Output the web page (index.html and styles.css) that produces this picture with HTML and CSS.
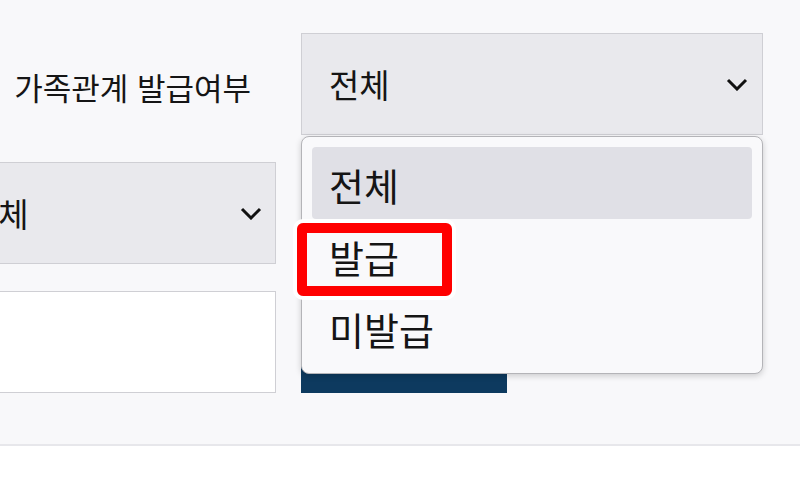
FILE: index.html
```html
<!DOCTYPE html>
<html lang="ko">

<head>
    <meta charset="UTF-8">
    <meta name="viewport" content="width=device-width, initial-scale=1.0">
    <title>가족관계 발급여부</title>
    <link rel="stylesheet" href="styles.css">
</head>

<body>
    <div class="search-panel">
        <div class="search-grid">
            <div class="field-label">가족관계 발급여부</div>
            <div class="field">
                <div class="select">
                    <span>전체</span>
                    <svg class="chevron" viewBox="0 0 22 13"><path d="M2 2 L11 11 L20 2" /></svg>
                </div>

                <!-- opened option list -->
                <ul class="option-list">
                    <li class="option is-selected">전체</li>
                    <li class="option">발급<span class="mark"></span></li>
                    <li class="option">미발급</li>
                </ul>
            </div>

            <div class="field field-left">
                <div class="select">
                    <span>전체</span>
                    <svg class="chevron" viewBox="0 0 22 13"><path d="M2 2 L11 11 L20 2" /></svg>
                </div>
            </div>
            <div class="field">
                <!-- covered by the open list -->
                <div class="select"></div>
            </div>

            <div class="field field-left">
                <input class="text-input" type="text">
            </div>
            <div class="field">
                <button class="search-button" aria-label="조회"></button>
            </div>
        </div>
    </div>
    <div class="page-rest"></div>
</body>

</html>
```

FILE: styles.css
```css
:root {
    --panel-bg: #f8f8fa;
    --select-bg: #e9e9ed;
    --field-border: #cfcfd4;
    --text-color: #151515;
    --navy: #0d3a5f;
    --menu-bg: #f9f9fb;
    --menu-active: #e0e0e6;
}

* {
    margin: 0;
    padding: 0;
    box-sizing: border-box;
}

body {
    font-family: "Noto Sans CJK KR", "Noto Sans", sans-serif;
    color: var(--text-color);
    background: #ffffff;
    overflow: hidden;
}

.search-panel {
    background-color: var(--panel-bg);
    border-bottom: 2px solid #e7e7eb;
    height: 446px;
    padding-top: 33px;
    overflow: hidden;
}

.search-grid {
    display: grid;
    grid-template-columns: 336px 462px;
    grid-auto-rows: 102px;
    column-gap: 25px;
    row-gap: 27px;
    margin-left: -60px;
}

.field-label {
    display: flex;
    align-items: center;
    justify-content: flex-end;
    padding-right: 25px;
    font-size: 31px;
    padding-top: 4px;
    white-space: nowrap;
}

.field {
    position: relative;
}

.select {
    height: 100%;
    display: flex;
    align-items: center;
    justify-content: space-between;
    padding: 0 14px 0 27px;
    background-color: var(--select-bg);
    border: 1px solid var(--field-border);
    font-size: 33px;
}

.field-left .select {
    padding-right: 13px;
}

.chevron {
    flex-shrink: 0;
    width: 22px;
    height: 13px;
    fill: none;
    stroke: #111;
    stroke-width: 3;
}

.text-input {
    width: 100%;
    height: 100%;
    background: #ffffff;
    border: 1px solid var(--field-border);
}

.search-button {
    width: 206px;
    height: 100%;
    border: none;
    background-color: var(--navy);
}

.option-list {
    position: absolute;
    top: 103px;
    left: 0;
    width: 462px;
    height: 238px;
    padding: 10px;
    list-style: none;
    background-color: var(--menu-bg);
    border: 1px solid #b4b4b8;
    border-radius: 8px;
    box-shadow: 0 2px 6px rgba(0, 0, 0, 0.18);
    z-index: 10;
}

.option {
    position: relative;
    height: 72px;
    display: flex;
    align-items: center;
    padding-left: 17px;
    padding-top: 2px;
    font-size: 38px;
    border-radius: 4px;
}

.option.is-selected {
    background-color: var(--menu-active);
}

/* red annotation box */
.mark {
    position: absolute;
    left: -15px;
    top: 4px;
    width: 155px;
    height: 73px;
    border: 10px solid #ff0000;
    border-radius: 6px;
    box-shadow: 0 0 0 4px #ffffff;
}

.page-rest {
    height: 40px;
}
```
